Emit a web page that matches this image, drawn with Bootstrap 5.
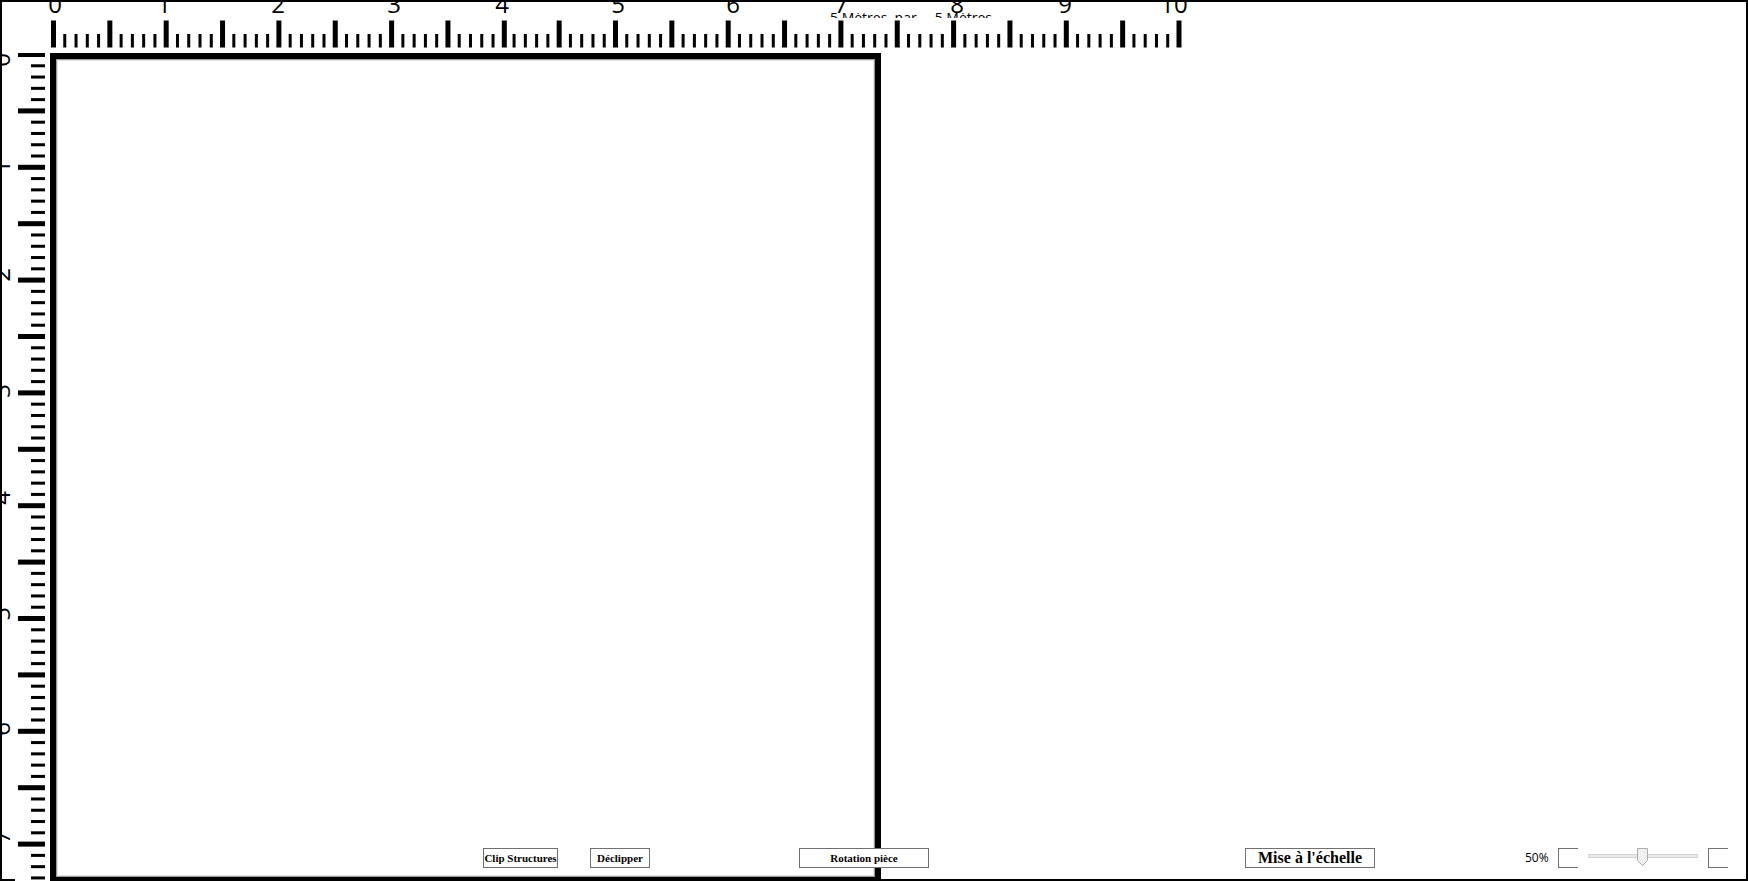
<!DOCTYPE html>
<html lang="fr">
<head>
<meta charset="utf-8">
<meta name="viewport" content="width=device-width, initial-scale=1">
<title>Plan de la pièce</title>
<link href="https://cdn.jsdelivr.net/npm/bootstrap@5.3.0/dist/css/bootstrap.min.css" rel="stylesheet">
<style>
body{font-family:"Open Sans","Noto Sans",sans-serif;color:#000;background:#fff}
.plan{border:2px solid #000}
.ruler-top{height:51px}
.ruler-side{width:48px;margin-bottom:-2px}
.scale-num{font-size:24px}
.room{border:6px solid #000;border-bottom-width:2px;box-shadow:inset 0 0 0 1px #999,inset 0 0 0 2px #e4e4e4}
.room-size{font-size:14px;line-height:10px;height:5px;top:11px;left:828px;white-space:pre}
.room-size span{margin-left:18px}
.tools{bottom:11px;padding-left:481px;padding-right:18px}
.tool{height:20px;border:1px solid #707070;border-radius:0;background:#fff;color:#000;padding:0;font:bold 11px/16px "Palatino Linotype","Liberation Serif",serif;white-space:nowrap}
.tool-clip{width:75px}
.tool-unclip{width:60px;margin-left:32px}
.tool-turn{width:130px;margin-left:149px}
.tool-scale{width:130px;font-size:16px;margin-right:150px}
.tool-step{width:20px;border-right:0}
.zoom-value{font-size:12px;line-height:20px;width:33px}
.zoom-range{appearance:none;-webkit-appearance:none;width:110px;height:20px;margin:0 10px;background:none}
.zoom-range::-webkit-slider-runnable-track{height:4px;margin-top:-4px;background:#e7eaea;border:1px solid #d6d6d6}
.zoom-range::-webkit-slider-thumb{-webkit-appearance:none;width:11px;height:18px;margin-top:-7px;background:url("data:image/svg+xml,%3Csvg xmlns='http://www.w3.org/2000/svg' width='11' height='18'%3E%3Cpath d='M.5.5h10v12l-5 5-5-5z' fill='%23f0f0f0' stroke='%23acacac'/%3E%3C/svg%3E")}
</style>
</head>
<body>
<main class="plan position-relative d-flex flex-column min-vh-100">
  <svg class="ruler-top w-100 flex-shrink-0" id="rulerX" role="img" aria-label="Règle horizontale"></svg>
  <div class="room-size position-absolute overflow-hidden">5 Mètres  par<span>5 Mètres</span></div>
  <div class="d-flex flex-grow-1">
    <div class="ruler-side position-relative flex-shrink-0">
      <svg class="position-absolute w-100 h-100 overflow-visible" id="rulerY" role="img" aria-label="Règle verticale"></svg>
    </div>
    <div class="room" id="room"></div>
  </div>
  <div class="tools position-absolute start-0 end-0 d-flex align-items-center">
    <button type="button" class="tool tool-clip">Clip Structures</button>
    <button type="button" class="tool tool-unclip">Déclipper</button>
    <button type="button" class="tool tool-turn">Rotation pièce</button>
    <button type="button" class="tool tool-scale ms-auto">Mise à l'échelle</button>
    <label class="zoom-value" for="zoom">50%</label>
    <button type="button" class="tool tool-step" aria-label="Réduire"></button>
    <input type="range" class="zoom-range" id="zoom" min="0" max="100" value="49">
    <button type="button" class="tool tool-step" aria-label="Agrandir"></button>
  </div>
</main>
<script>
const NS = 'http://www.w3.org/2000/svg';
function add(svg, tag, attrs, text) {
  const el = document.createElementNS(NS, tag);
  for (const k in attrs) el.setAttribute(k, attrs[k]);
  if (text !== undefined) el.textContent = text;
  svg.appendChild(el);
}
// Centres of the numerals along each ruler
const numsX = [53, 162, 276, 392, 500, 616, 731, 839, 955, 1063, 1172];
const numsY = [7, 114, 222, 338, 445, 561, 676, 784];
const step = 11.27;
const rx = document.getElementById('rulerX');
for (let i = 0; i <= 100; i++) {
  const major = i % 5 === 0, w = major ? 5 : 3;
  const c = 51.5 + i * step - (i > 40 ? 1.5 : 0);
  add(rx, 'rect', {x: c - w / 2, y: major ? 18.5 : 32, width: w, height: major ? 27 : 13.5});
}
numsX.forEach((x, n) => add(rx, 'text', {x, y: 11, 'text-anchor': 'middle', class: 'scale-num'}, n));
const ry = document.getElementById('rulerY');
// The numerals are cut at the left edge by the frame
numsY.forEach((y, n) => add(ry, 'text', {transform: `translate(8 ${y}) rotate(-90)`, 'text-anchor': 'middle', class: 'scale-num'}, n));
add(ry, 'rect', {x: -2, y: -51, width: 2, height: '110%'});
add(ry, 'rect', {x: 13, y: 0, width: 35, height: '100%', fill: '#fff'});
for (let i = 0; i <= 73; i++) {
  const major = i % 5 === 0, w = major ? 5 : 3;
  const c = 1.5 + i * 11.28;
  add(ry, 'rect', {x: major ? 16 : 29, y: c - w / 2, width: major ? 27 : 14, height: w});
}
ry.classList.replace('overflow-visible', 'overflow-hidden');
document.getElementById('room').style.width = Math.round(73.75 * step) + 'px';
</script>
<script src="https://cdn.jsdelivr.net/npm/bootstrap@5.3.0/dist/js/bootstrap.bundle.min.js"></script>
</body>
</html>
